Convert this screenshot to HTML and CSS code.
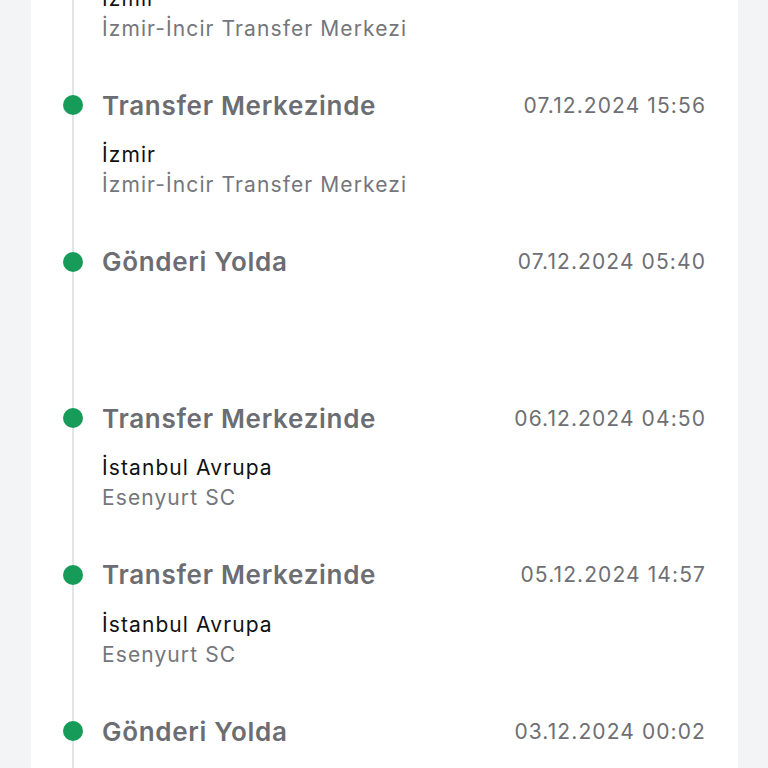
FILE: index.html
```html
<!DOCTYPE html>
<html lang="tr">
<head>
<meta charset="UTF-8">
<title>Gönderi Takibi</title>
<link rel="stylesheet" href="styles.css">
</head>
<body>
<div class="card">
<div class="timeline">

<div class="item">
<div class="row"><span class="dot"></span><span class="title">Transfer Merkezinden Çıktı</span><span class="date">07.12.2024 18:12</span></div>
<div class="body"><div class="place">İzmir</div><div class="sub">İzmir-İncir Transfer Merkezi</div></div>
</div>

<div class="item">
<div class="row"><span class="dot"></span><span class="title">Transfer Merkezinde</span><span class="date">07.12.2024 15:56</span></div>
<div class="body"><div class="place">İzmir</div><div class="sub">İzmir-İncir Transfer Merkezi</div></div>
</div>

<div class="item">
<div class="row"><span class="dot"></span><span class="title">Gönderi Yolda</span><span class="date">07.12.2024 05:40</span></div>
<div class="body"></div>
</div>

<div class="item">
<div class="row"><span class="dot"></span><span class="title">Transfer Merkezinde</span><span class="date">06.12.2024 04:50</span></div>
<div class="body"><div class="place">İstanbul Avrupa</div><div class="sub">Esenyurt SC</div></div>
</div>

<div class="item">
<div class="row"><span class="dot"></span><span class="title">Transfer Merkezinde</span><span class="date">05.12.2024 14:57</span></div>
<div class="body"><div class="place">İstanbul Avrupa</div><div class="sub">Esenyurt SC</div></div>
</div>

<div class="item">
<div class="row"><span class="dot"></span><span class="title">Gönderi Yolda</span><span class="date">03.12.2024 00:02</span></div>
<div class="body"></div>
</div>

</div>
</div>
</body>
</html>
```

FILE: styles.css
```css
html,body{height:100%;}
body{margin:0;background:#f3f4f6;font-family:Inter,"Noto Sans",sans-serif;overflow:hidden;}
.card{width:707px;margin-left:31px;min-height:100%;background:#fff;}
.timeline{margin-top:-67.5px;padding:0 33px 0 32px;background:linear-gradient(#e3e4e8,#e3e4e8) no-repeat 41px 0/2px 100%;}
.item{padding-bottom:45.5px;}
.row{display:flex;align-items:center;height:32px;}
.dot{width:20px;height:20px;border-radius:50%;background:#169c58;flex:none;margin-right:19px;}
.title{flex:1;font-size:26px;font-weight:600;letter-spacing:0.7px;color:#6b6d72;white-space:nowrap;}
.date{font-size:21px;letter-spacing:1.1px;color:#6e6f73;white-space:nowrap;margin-right:-1px;}
.body{margin:19px 0 0 39px;height:60px;font-size:21px;line-height:30px;letter-spacing:1.1px;}
.place{color:#111;}
.sub{color:#74767b;}
```
